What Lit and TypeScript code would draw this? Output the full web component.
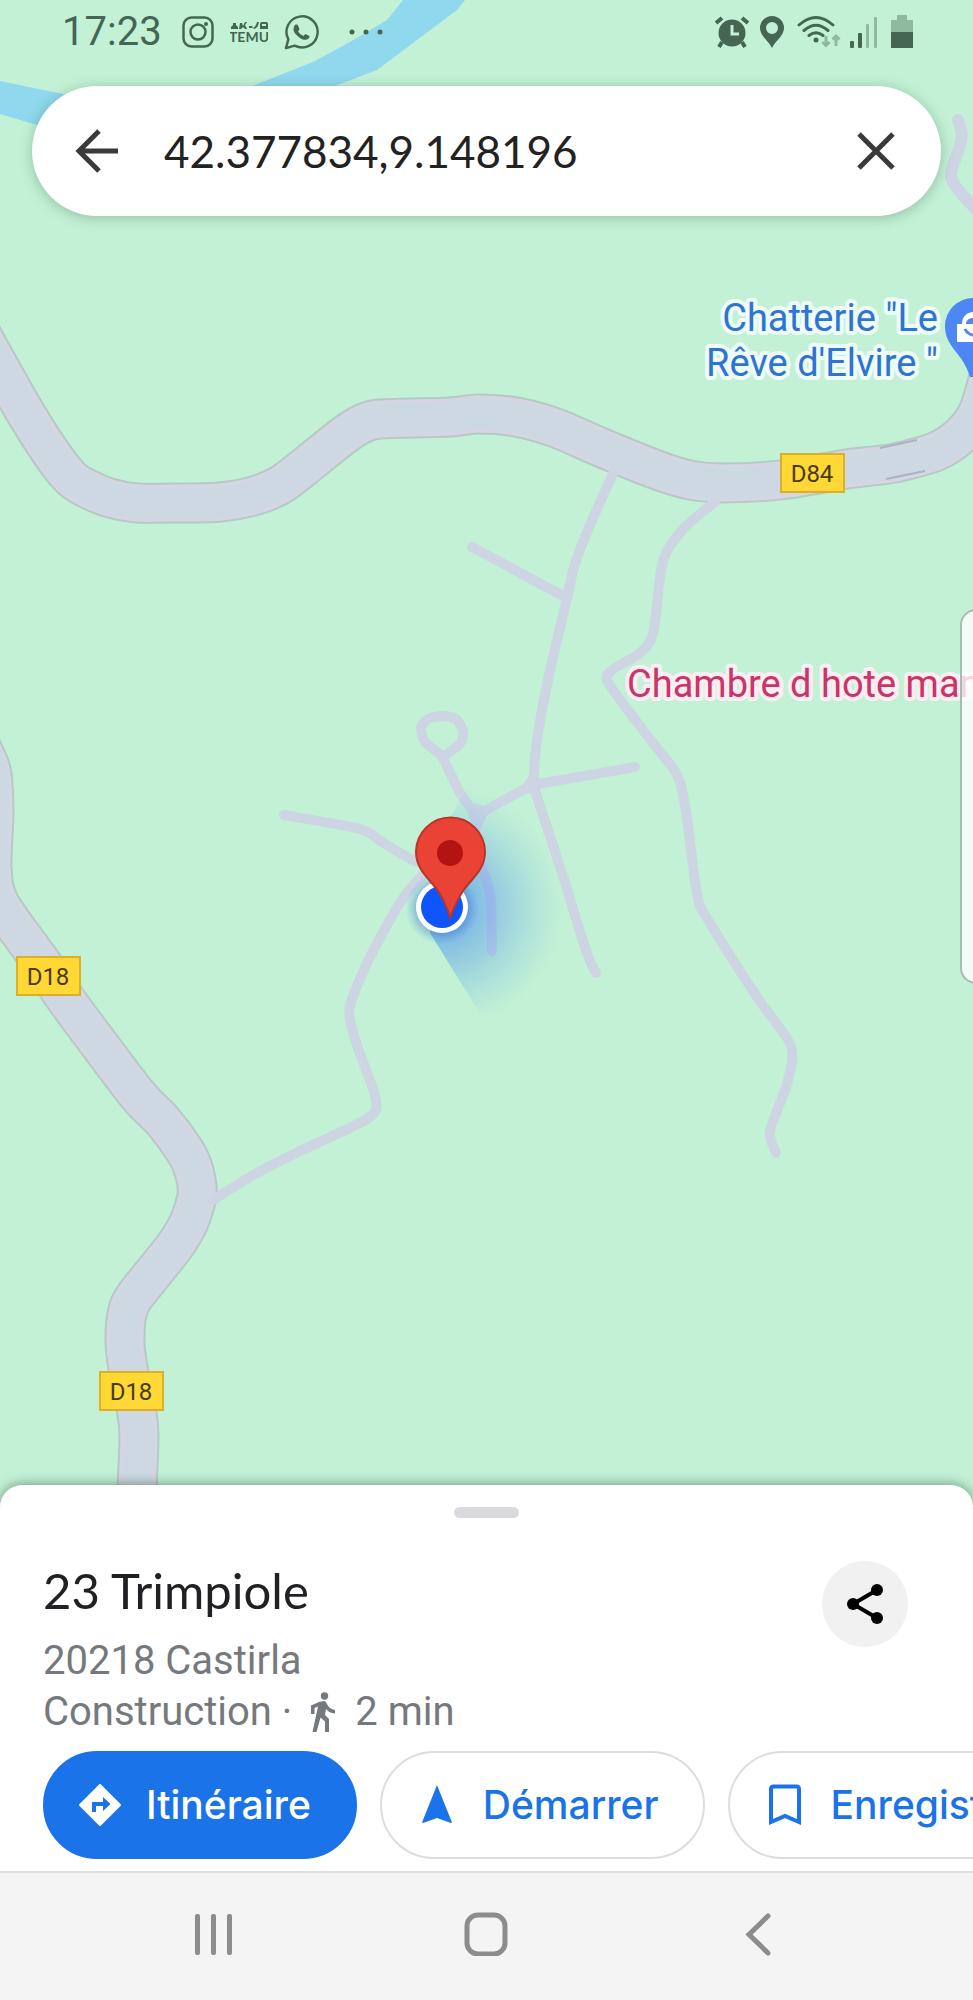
import { LitElement, html, svg, css } from "lit";
import { customElement } from "lit/decorators.js";

type Point = [number, number];

/** Turns a list of survey points into a softly rounded path. */
function smooth(points: Point[], tension = 0.13): string {
  let d = `M${points[0][0]} ${points[0][1]}`;
  for (let i = 0; i < points.length - 1; i++) {
    const p0 = points[i - 1] ?? points[i];
    const p1 = points[i];
    const p2 = points[i + 1];
    const p3 = points[i + 2] ?? p2;
    const a = [p1[0] + (p2[0] - p0[0]) * tension, p1[1] + (p2[1] - p0[1]) * tension];
    const b = [p2[0] - (p3[0] - p1[0]) * tension, p2[1] - (p3[1] - p1[1]) * tension];
    d += ` C${a[0].toFixed(1)} ${a[1].toFixed(1)} ${b[0].toFixed(1)} ${b[1].toFixed(1)} ${p2[0]} ${p2[1]}`;
  }
  return d;
}

const mainRoads: Point[][] = [
  [[-20, 332], [0, 368], [28, 417], [56, 460], [73, 480], [90, 490], [110, 498], [138, 503], [180, 503], [220, 502], [257, 495], [285, 482], [343, 436], [362, 424], [380, 419], [450, 417], [478, 414], [516, 417], [556, 428], [600, 447], [657, 470], [690, 480], [722, 483], [780, 480], [847, 469], [895, 463], [937, 451], [962, 434], [978, 412], [988, 380]],
  [[-25, 735], [-9, 770], [-6, 812], [-8, 868], [0, 904], [44, 966], [67, 1001], [136, 1093], [162, 1120], [185, 1151], [194, 1171], [197, 1195], [189, 1222], [174, 1247], [135, 1296], [127, 1314], [125, 1342], [128, 1368], [136, 1408], [139, 1436], [136, 1510]],
];

const lanes: Point[][] = [
  [[613, 474], [590, 525], [575, 564], [567, 598], [548, 680], [537, 740], [533, 785]],
  [[472, 547], [567, 598]],
  [[533, 785], [635, 767]],
  [[533, 785], [560, 867], [587, 953], [596, 973]],
  [[533, 785], [497, 804], [478, 817], [474, 845], [490, 893], [492, 951]],
  [[478, 817], [460, 793], [442, 757], [425, 742], [421, 728], [428, 719], [442, 716], [456, 719], [463, 731], [460, 744], [442, 757]],
  [[284, 815], [360, 829], [382, 842], [413, 860], [440, 868]],
  [[430, 868], [403, 898], [370, 957], [351, 1002], [350, 1020], [358, 1048], [376, 1100], [367, 1119], [300, 1151], [255, 1174], [213, 1200]],
  [[715, 502], [685, 527], [666, 553], [660, 577], [653, 634], [640, 653], [611, 671], [609, 684], [650, 739], [672, 767], [680, 782], [687, 818], [697, 894], [707, 918], [757, 997], [791, 1046], [787, 1084], [770, 1131], [776, 1153]],
];

const shields = [
  { x: 780, y: 453, name: "D84" },
  { x: 16, y: 956, name: "D18" },
  { x: 99, y: 1371, name: "D18" },
];

@customElement("map-canvas")
export class MapCanvas extends LitElement {
  static styles = css`
    :host { display: block; }
    .map { display: block; width: 100%; height: 100%; background: #c3f1d6; }
    .river { fill: #90d8ed; }
    .casing, .road, .lane { fill: none; stroke-linecap: round; stroke-linejoin: round; }
    .casing { stroke: #b5c9c6; stroke-width: 41px; }
    .verge { fill: none; stroke: #d6d6e3; stroke-width: 37px; }
    .road { stroke: #ced8e3; stroke-width: 31px; }
    .lane { stroke: #cdd5e3; stroke-width: 10px; }
    .lane.wide { stroke-width: 12px; }
    .tick { stroke: #aeb1c4; stroke-width: 2px; }
    text { font-family: Roboto, sans-serif; }
    .place { font-size: 38px; paint-order: stroke; stroke: #eefbf6; stroke-width: 8px; stroke-linejoin: round; }
    .shop { fill: #2d74d3; text-anchor: end; }
    .lodging { fill: #cb3467; stroke: #fbeef3; }
    .shield { fill: #ffd836; stroke: #dcaf2b; stroke-width: 2px; }
    .shield-name { font-size: 24px; fill: #4a3a10; text-anchor: middle; }
  `;

  render() {
    return html`
      <svg class="map" viewBox="0 0 973 1505" preserveAspectRatio="xMidYMin slice" role="img" aria-label="Carte de Castirla">
        <defs>
          <radialGradient id="beam" gradientUnits="userSpaceOnUse" cx="442" cy="907" r="122">
            <stop offset="0.1" stop-color="#3f86f5" stop-opacity="0.62" />
            <stop offset="0.5" stop-color="#4a90ee" stop-opacity="0.34" />
            <stop offset="1" stop-color="#6ab4e4" stop-opacity="0" />
          </radialGradient>
          <radialGradient id="halo">
            <stop offset="0.6" stop-color="#2f62b8" stop-opacity="0.5" />
            <stop offset="1" stop-color="#4a90ee" stop-opacity="0" />
          </radialGradient>
        </defs>
        <path class="river" d="M0 81 63 94 160 104 252 86 313 62 350 42 387 20 403 0H465L457 10 377 70 335 86 180 140 37 125 0 114Z" />
        ${mainRoads.map((r) => svg`<path class="casing" d=${smooth(r)} />`)}
        ${mainRoads.map((r) => svg`<path class="verge" d=${smooth(r)} />`)}
        ${mainRoads.map((r) => svg`<path class="road" d=${smooth(r)} />`)}
        ${lanes.map((l) => svg`<path class="lane" d=${smooth(l)} />`)}
        <path class="lane wide" d=${smooth([[958, 120], [962, 135], [958, 152], [951, 173], [956, 187], [980, 214]])} />
        <circle cx="533" cy="785" r="9" fill="#cdd5e3" />
        <path d="M464 800 476 840 490 808Z" fill="#cdd5e3" />
        <path class="tick" d="M880 448 917 440M886 479 925 471" />

        <path d="M430 933V853L467 787 600 760V1060H512L484 1020Z" fill="url(#beam)" />
        <circle cx="442" cy="908" r="37" fill="url(#halo)" />
        <circle cx="442" cy="907" r="26" fill="#fff" />
        <circle cx="442" cy="907" r="21" fill="#0f55fb" />
        <path d="M450 918C448 910 444 900 438 891 430 879 416 870 416 852A34 34 0 0 1 485 852C485 870 471 879 463 891 457 900 453 910 450 918Z" fill="#ea4335" stroke="#b5362a" stroke-width="2" />
        <circle cx="450" cy="853" r="13" fill="#b31412" />

        <path d="M973 298A28 28 0 0 0 945 326C945 348 963 352 970 377H990V298Z" fill="#4d86f5" />
        <path d="M957 324H962C962 308 985 308 985 324H990V342H957ZM966 324H980C980 316 966 316 966 324Z" fill="#fff" fill-rule="evenodd" />
        <path d="M965 329Q968 336 980 336" fill="none" stroke="#4d86f5" stroke-width="3" />

        <text class="place shop" x="938" y="331">Chatterie "Le</text>
        <text class="place shop" x="938" y="376">Rêve d'Elvire "</text>
        <text class="place lodging" x="627" y="697">Chambre d hote man</text>
        ${shields.map(
          (s) => svg`<rect class="shield" x=${s.x + 1} y=${s.y + 1} width="63" height="38" />
            <text class="shield-name" x=${s.x + 32} y=${s.y + 29}>${s.name}</text>`
        )}
        <rect x="961" y="610" width="60" height="373" rx="15" fill="#fff" fill-opacity="0.78" stroke="#a5bdb0" stroke-width="2" />
      </svg>
    `;
  }
}

@customElement("status-bar")
export class StatusBar extends LitElement {
  static styles = css`
    :host { display: flex; justify-content: space-between; align-items: center; height: 64px; padding: 0 60px 0 62px; color: #446653; font-family: Roboto, sans-serif; }
    .side { display: flex; align-items: center; }
    .left { gap: 16px; }
    .right { gap: 10px; }
    .time { font-size: 40px; line-height: 48px; margin-right: 4px; }
    .dots { margin-left: 14px; }
    .signal { margin-left: -2px; }
    .battery { margin-left: 2px; }
    svg { display: block; flex: none; }
    .brand { font-size: 14px; font-weight: 700; font-family: Lato, sans-serif; }
  `;

  render() {
    return html`
      <div class="side left">
        <time class="time">17:23</time>
        <svg width="32" height="32" viewBox="0 0 32 32" fill="none" stroke="currentColor" stroke-width="2.500">
          <rect x="1.500" y="1.500" width="29" height="29" rx="8" /><circle cx="16" cy="16" r="7.500" /><circle cx="24" cy="8" r="2" fill="currentColor" stroke="none" />
        </svg>
        <svg width="38" height="32" viewBox="1 0 38 32" fill="currentColor">
          <path d="M2 13V11L4 9V7H7V9L9 11V13ZM11 7H13L14 10 16 6H18L16 9 18 13H16L14 11 12 13H10ZM20 10H23L24 12H20ZM24 12Q27 11 28 6H30Q29 12 25 13ZM31 8Q31 6 33 6H37Q39 6 39 8V13H31ZM33 8V10H37V8Z" fill-rule="evenodd" />
          <text class="brand" x="20" y="26" text-anchor="middle">TEMU</text>
        </svg>
        <svg width="35" height="35" viewBox="0 0 36 36">
          <path d="M2 34 4.500 25A16 16 0 1 1 11 31.500Z" fill="none" stroke="currentColor" stroke-width="2.500" stroke-linejoin="round" />
          <path d="M10 13C11 9 13 10 14 10L16 14.500 14.500 17Q16 20 20 21.500L22 19.500 26 21.500Q27 23 24 25 20 27 14.500 22 8.500 17 10 13Z" fill="currentColor" />
        </svg>
        <svg class="dots" width="34" height="6" viewBox="0 0 34 6" fill="currentColor"><circle cx="3" cy="3" r="2.500" /><circle cx="17" cy="3" r="2.500" /><circle cx="31" cy="3" r="2.500" /></svg>
      </div>
      <div class="side right">
        <svg width="34" height="34" viewBox="0 0 34 34" fill="none" stroke="currentColor">
          <circle cx="17" cy="18" r="13.500" fill="currentColor" stroke="none" />
          <path d="M1 8 7 3M33 8 27 3M7 27 4 32M27 27 30 32" stroke-width="4" />
          <path d="M17 10V19H24" stroke="#c3f1d6" stroke-width="3" />
        </svg>
        <svg width="26" height="34" viewBox="0 0 26 34"><path d="M13 33C10 26 1 21 1 13A12 12 0 0 1 25 13C25 21 16 26 13 33ZM13 7A6 6 0 1 0 13 19A6 6 0 1 0 13 7Z" fill="currentColor" fill-rule="evenodd" /></svg>
        <svg width="46" height="34" viewBox="0 0 46 34" fill="none" stroke="currentColor" stroke-width="3">
          <path d="M4 10Q21 -5 38 10M9 15.500Q21 5 33 15.500M14 20.500Q21 15 28 20.500" stroke-linecap="round" />
          <circle cx="21" cy="25" r="2.500" fill="currentColor" stroke="none" />
          <path d="M31 21V30M27.500 27 31 30.500 34.500 27M41 31V21M37.500 24.500 41 21 44.500 24.500" opacity="0.4" />
        </svg>
        <svg class="signal" width="30" height="34" viewBox="0 0 30 34" fill="currentColor">
          <rect x="1" y="26" width="4" height="7" rx="1" /><rect x="9" y="18" width="4" height="15" rx="1" />
          <rect x="17" y="9" width="3" height="24" rx="1" opacity="0.4" /><rect x="25" y="2" width="3" height="31" rx="1" opacity="0.4" />
        </svg>
        <svg class="battery" width="22" height="34" viewBox="0 0 22 34" fill="currentColor"><path d="M0 17V5H6V0H16V5H22V17Z" opacity="0.4" /><path d="M0 17H22V33H0Z" /></svg>
      </div>
    `;
  }
}

@customElement("search-bar")
export class SearchBar extends LitElement {
  static styles = css`
    :host { display: flex; align-items: center; height: 130px; margin: 22px 32px 0; padding: 0 32px; box-sizing: border-box; border-radius: 65px; background: #fff; box-shadow: 0 2px 14px rgba(30, 80, 50, 0.3); }
    .icon { display: grid; place-items: center; flex: none; width: 66px; height: 66px; padding: 0; border: 0; background: none; color: #3a3a3a; }
    .query { flex: 1; min-width: 0; height: 66px; margin: 0 34px; padding: 0; border: 0; outline: 0; background: none; color: #222; font: 44px/66px Lato, sans-serif; }
  `;

  render() {
    return html`
      <button class="icon" aria-label="Retour">
        <svg width="44" height="44" viewBox="0 0 44 44" fill="none" stroke="currentColor" stroke-width="5"><path d="M43 22H4M24 2 4 22 24 42" /></svg>
      </button>
      <input class="query" aria-label="Rechercher" value="42.377834,9.148196" />
      <button class="icon" aria-label="Effacer">
        <svg width="38" height="38" viewBox="0 0 38 38" fill="none" stroke="currentColor" stroke-width="5"><path d="M2 2 36 36M36 2 2 36" /></svg>
      </button>
    `;
  }
}

@customElement("place-sheet")
export class PlaceSheet extends LitElement {
  static styles = css`
    :host { display: block; border-radius: 22px 22px 0 0; background: #fff; box-shadow: 0 -1px 12px rgba(30, 70, 50, 0.5); font-family: Roboto, sans-serif; overflow: hidden; }
    .handle { width: 65px; height: 11px; margin: 22px auto 0; border-radius: 6px; background: #d9d9de; }
    .summary { display: flex; justify-content: space-between; align-items: flex-start; padding: 43px 65px 0 43px; }
    .title { margin: 0 0 16px; font: 400 49px/58px Lato, sans-serif; color: #202124; }
    .line { display: flex; align-items: center; margin: 0; font-size: 40px; line-height: 51px; color: #75797d; }
    .walk { margin: 0 19px 0 18px; }
    .share { display: grid; place-items: center; flex: none; width: 86px; height: 86px; padding: 0; border: 0; border-radius: 50%; background: #f1f1f1; color: #000; }
    .actions { display: flex; gap: 23px; padding: 14px 0 12px 43px; overflow: hidden; }
    .action { display: flex; align-items: center; flex: none; gap: 22px; height: 108px; box-sizing: border-box; padding: 0 44px 0 31px; border: 2px solid #dcdde0; border-radius: 54px; background: #fff; color: #1a73e8; font: 500 39px/48px Inter, sans-serif; }
    .primary { border-color: #1a73e8; background: #1a73e8; color: #fff; }
    svg { display: block; flex: none; }
  `;

  render() {
    return html`
      <div class="handle"></div>
      <div class="summary">
        <div>
          <h1 class="title">23 Trimpiole</h1>
          <p class="line">20218 Castirla</p>
          <p class="line">
            <span>Construction ·</span>
            <svg class="walk" width="26" height="40" viewBox="0 0 26 40" fill="currentColor">
              <circle cx="14.500" cy="4" r="3.700" />
              <path d="M9 10 14 9Q16 9 17 12 19 17 25 18V21.500Q19 21 16 17L15 23 19 27V40H15V29.500L10.500 25.500 6.500 40H2.500L8 14.500 4.500 16V22H1V13.500Z" />
            </svg>
            <span>2 min</span>
          </p>
        </div>
        <button class="share" aria-label="Partager">
          <svg width="38" height="42" viewBox="0 0 38 42" fill="currentColor">
            <path d="M31 7 7 21 31 35" fill="none" stroke="currentColor" stroke-width="4" />
            <circle cx="31" cy="7" r="6" /><circle cx="7" cy="21" r="6" /><circle cx="31" cy="35" r="6" />
          </svg>
        </button>
      </div>
      <div class="actions">
        <button class="action primary">
          <svg width="48" height="48" viewBox="0 0 48 48">
            <path d="M24 4 44 24 24 44 4 24Z" fill="#fff" stroke="#fff" stroke-width="2" stroke-linejoin="round" />
            <path d="M16 31V21H27V16L34.500 23 27 30V25H20V31Z" fill="#1a73e8" />
          </svg>
          Itinéraire
        </button>
        <button class="action">
          <svg width="48" height="48" viewBox="0 0 48 48"><path d="M24 4 39 41.500 38 42 24 37 10 42 9 41.500Z" fill="currentColor" /></svg>
          Démarrer
        </button>
        <button class="action">
          <svg width="48" height="48" viewBox="0 0 48 48"><path d="M10 41V8Q10 5.500 12.500 5.500H35.500Q38 5.500 38 8V41L24 35Z" fill="none" stroke="currentColor" stroke-width="4" /></svg>
          Enregistrer
        </button>
      </div>
    `;
  }
}

@customElement("system-nav")
export class SystemNav extends LitElement {
  static styles = css`
    :host { display: grid; grid-template-columns: repeat(3, 1fr); height: 129px; box-sizing: border-box; padding: 0 8% 5px; border-top: 2px solid #dedede; background: #f4f4f4; }
    .key { display: grid; place-items: center; padding: 0; border: 0; background: none; color: #8c8c8c; }
  `;

  render() {
    return html`
      <button class="key" aria-label="Applications récentes">
        <svg width="44" height="44" viewBox="0 0 44 44" fill="currentColor"><rect x="3" y="2" width="5" height="41" rx="2" /><rect x="19" y="2" width="5" height="41" rx="2" /><rect x="35" y="2" width="5" height="41" rx="2" /></svg>
      </button>
      <button class="key" aria-label="Accueil">
        <svg width="44" height="44" viewBox="0 0 44 44" fill="none" stroke="currentColor" stroke-width="5"><rect x="3" y="3" width="38" height="39" rx="11" /></svg>
      </button>
      <button class="key" aria-label="Retour">
        <svg width="44" height="44" viewBox="0 0 44 44" fill="none" stroke="currentColor" stroke-width="5" stroke-linecap="round"><path d="M31 4 12 22.500 31 41" /></svg>
      </button>
    `;
  }
}

@customElement("app-root")
export class AppRoot extends LitElement {
  static styles = css`
    :host { display: flex; flex-direction: column; min-height: 100vh; background: #fff; overflow: hidden; }
    .stage { position: relative; flex: 1 0 700px; margin-bottom: -20px; }
    .canvas { position: absolute; inset: 0; }
    .over { position: relative; }
  `;

  render() {
    return html`
      <main class="stage">
        <map-canvas class="canvas"></map-canvas>
        <status-bar class="over"></status-bar>
        <search-bar class="over"></search-bar>
      </main>
      <place-sheet class="over"></place-sheet>
      <system-nav class="over"></system-nav>
    `;
  }
}
